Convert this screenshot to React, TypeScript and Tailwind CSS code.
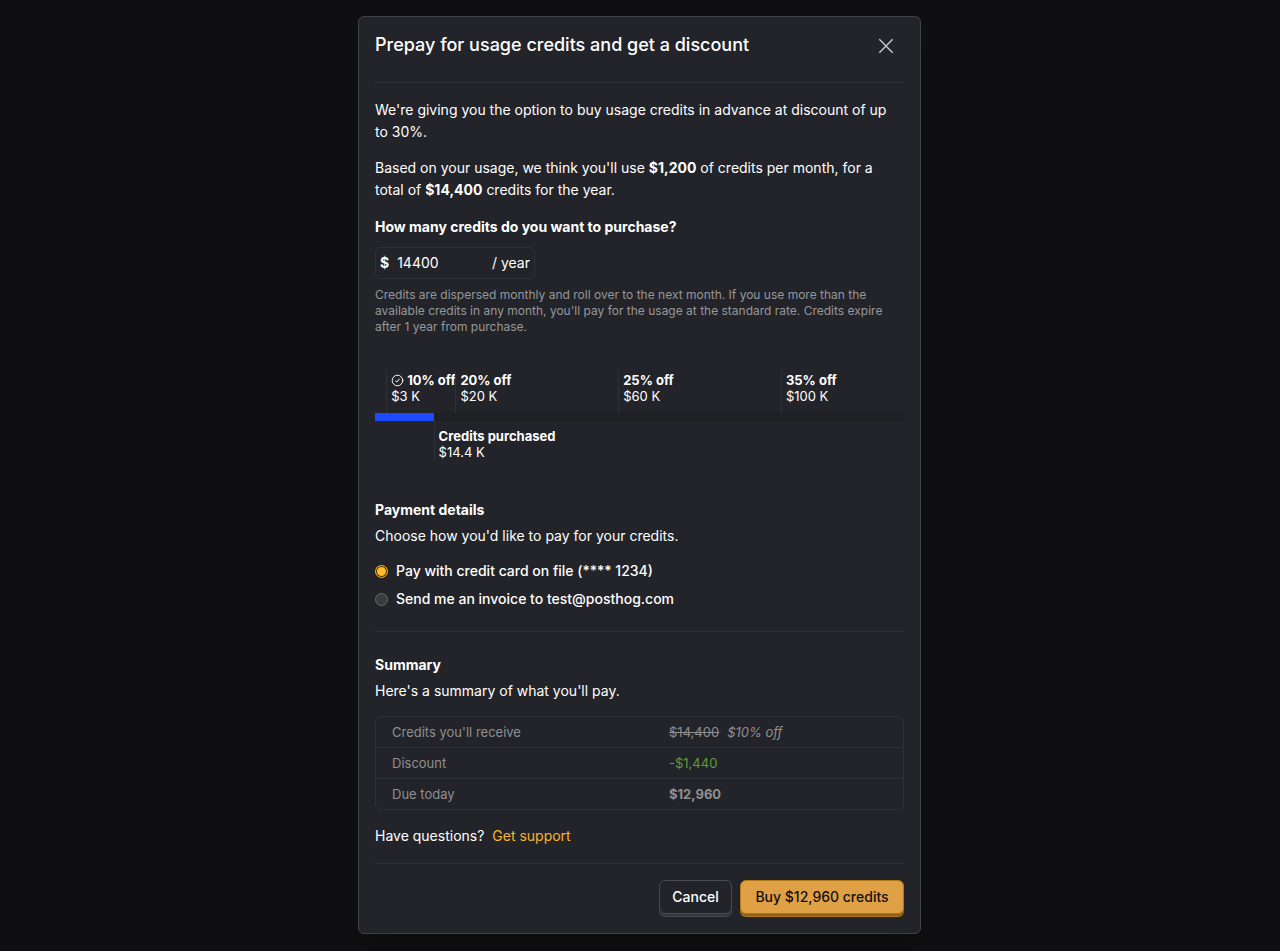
import { useState } from 'react'

const SCALE_MAX = 130000

const tiers = [
  { credits: 3000, discount: '10% off', label: '$3 K', reached: true },
  { credits: 20000, discount: '20% off', label: '$20 K', reached: false },
  { credits: 60000, discount: '25% off', label: '$60 K', reached: false },
  { credits: 100000, discount: '35% off', label: '$100 K', reached: false },
]

const percent = (value: number) => `${(value / SCALE_MAX) * 100}%`

function CloseIcon() {
  return (
    <svg width="16" height="16" viewBox="0 0 16 16" fill="none" stroke="currentColor" strokeWidth="1.4" aria-hidden="true">
      <path d="M1.3 1.3 14.7 14.7M14.7 1.3 1.3 14.7" />
    </svg>
  )
}

function CheckCircleIcon() {
  return (
    <svg width="13" height="13" viewBox="0 0 13 13" fill="none" stroke="currentColor" strokeWidth="1" strokeLinecap="round" strokeLinejoin="round" aria-hidden="true">
      <circle cx="6.5" cy="6.5" r="5.3" />
      <path d="M4.6 6.9 5.8 8.1 8.4 5" />
    </svg>
  )
}

function Divider() {
  return <hr className="border-0 h-px bg-[#303136]" />
}

function CreditScale({ credits }: { credits: number }) {
  return (
    <div className="mt-9 text-[13px] leading-4">
      <div className="relative h-[42px]">
        {tiers.map((tier) => (
          <div
            key={tier.credits}
            className="absolute top-0 -ml-px h-full whitespace-nowrap border-l border-[#303136] pl-1 pt-px"
            style={{ left: percent(tier.credits) }}
          >
            <div className="flex items-center gap-[3px] font-bold">
              {tier.reached && <CheckCircleIcon />}
              {tier.discount}
            </div>
            <div>{tier.label}</div>
          </div>
        ))}
      </div>
      <div className="h-2 bg-[#1f2024]">
        <div className="h-full bg-[#1d4aff]" style={{ width: percent(credits) }} />
      </div>
      <div className="relative h-[41px]">
        <div
          className="absolute top-0 h-full whitespace-nowrap border-l border-[#303136] pl-1 pt-[7px]"
          style={{ left: percent(credits) }}
        >
          <div className="font-bold">Credits purchased</div>
          <div>$14.4 K</div>
        </div>
      </div>
    </div>
  )
}

const radioClass =
  'size-[13px] shrink-0 appearance-none rounded-full border border-[#68696c] bg-[#3b3b3b] checked:border-[#f7a501] checked:bg-[#ffbe26] checked:shadow-[inset_0_0_0_1px_#232429]'

export default function App() {
  const [amount, setAmount] = useState('14400')
  const [method, setMethod] = useState('card')

  return (
    <div className="min-h-screen bg-[#0f0f11] pt-4 pr-[17px] pb-[17px] pl-4 font-['Inter',sans-serif] text-sm leading-[22px] text-white">
      <div
        role="dialog"
        aria-labelledby="dialog-title"
        className="mx-auto w-full max-w-[563px] rounded-md border border-[#404147] bg-[#232429] px-4 shadow-[0_16px_16px_-16px_rgba(0,0,0,0.35)]"
      >
        <header className="flex items-start justify-between pt-4 pr-2 pb-[25px]">
          <h1 id="dialog-title" className="text-lg leading-6 font-medium">
            Prepay for usage credits and get a discount
          </h1>
          <button type="button" aria-label="Close" className="mt-[5px] mr-[2px] text-[#c8c8ca]">
            <CloseIcon />
          </button>
        </header>
        <Divider />

        <div className="pt-4">
          <p className="mb-[14px]">
            We're giving you the option to buy usage credits in advance at discount of up{' '}
            <span className="whitespace-nowrap">to 30%.</span>
          </p>
          <p className="mb-[15px]">
            Based on your usage, we think you'll use <strong className="font-bold">$1,200</strong> of credits per month, for a
            total of <strong className="font-bold">$14,400</strong> credits for the year.
          </p>

          <label htmlFor="credits" className="block pb-[9px] font-bold">
            How many credits do you want to purchase?
          </label>
          <div className="flex h-8 w-40 items-center rounded-md border border-[#303136] px-1">
            <span className="font-bold">$</span>
            <input
              id="credits"
              type="text"
              inputMode="numeric"
              value={amount}
              onChange={(e) => setAmount(e.target.value)}
              className="ml-2 min-w-0 flex-1 bg-transparent outline-none"
            />
            <span>/ year</span>
          </div>
          <p className="mt-2 text-xs leading-4 text-[#97979a]">
            Credits are dispersed monthly and roll over to the next month. If you use more than the available credits in any
            month, you'll pay for the usage at the standard rate. Credits expire after 1 year from purchase.
          </p>

          <CreditScale credits={Number(amount) || 0} />

          <h2 className="mt-[37px] font-bold">Payment details</h2>
          <p className="mt-1">Choose how you'd like to pay for your credits.</p>
          <div role="radiogroup" aria-label="Payment details" className="mt-[10px] mb-[18px] font-medium">
            <div className="flex h-7 items-center gap-2">
              <input
                id="pay-card"
                type="radio"
                name="method"
                className={radioClass}
                checked={method === 'card'}
                onChange={() => setMethod('card')}
              />
              <label htmlFor="pay-card">Pay with credit card on file (**** 1234)</label>
            </div>
            <div className="flex h-7 items-center gap-2">
              <input
                id="pay-invoice"
                type="radio"
                name="method"
                className={radioClass}
                checked={method === 'invoice'}
                onChange={() => setMethod('invoice')}
              />
              <label htmlFor="pay-invoice">Send me an invoice to test@posthog.com</label>
            </div>
          </div>
          <Divider />

          <h2 className="mt-[22px] font-bold">Summary</h2>
          <p className="mt-1">Here's a summary of what you'll pay.</p>
          <div className="mt-[14px] rounded-md border border-[#303136] text-[13px] leading-[18px] text-[#8f8f92]">
            <table className="w-full text-left">
              <tbody className="divide-y divide-[#303136]">
                <tr>
                  <th scope="row" className="w-[277px] px-4 py-[6px] font-normal">Credits you'll receive</th>
                  <td className="px-4 py-[6px]">
                    <span className="mr-2 line-through">$14,400</span>
                    <em>$10% off</em>
                  </td>
                </tr>
                <tr>
                  <th scope="row" className="px-4 py-[6px] font-normal">Discount</th>
                  <td className="px-4 py-[6px] text-[#5f9c3a]">-$1,440</td>
                </tr>
                <tr>
                  <th scope="row" className="px-4 py-[6px] font-normal">Due today</th>
                  <td className="px-4 py-[6px] font-bold">$12,960</td>
                </tr>
              </tbody>
            </table>
          </div>
          <p className="mt-[15px] mb-4">
            Have questions?{' '}
            <a href="#support" className="ml-1 text-[#f7b52c]">
              Get support
            </a>
          </p>
        </div>

        <Divider />
        <footer className="flex justify-end gap-2 py-4">
          <button
            type="button"
            className="mb-[3px] h-[34px] min-w-[73px] rounded-md border border-[#4a4b50] bg-[#232429] px-3 font-medium shadow-[0_2px_0_#35363a,0_3px_0_#4a4b50]"
          >
            Cancel
          </button>
          <button
            type="button"
            className="mb-[3px] h-[34px] min-w-[164px] rounded-md border border-[#b17816] bg-[#e0a045] px-3 font-medium text-[#111111] shadow-[0_2px_0_#8f6116,0_3px_0_#b17816]"
          >
            Buy $12,960 credits
          </button>
        </footer>
      </div>
    </div>
  )
}
